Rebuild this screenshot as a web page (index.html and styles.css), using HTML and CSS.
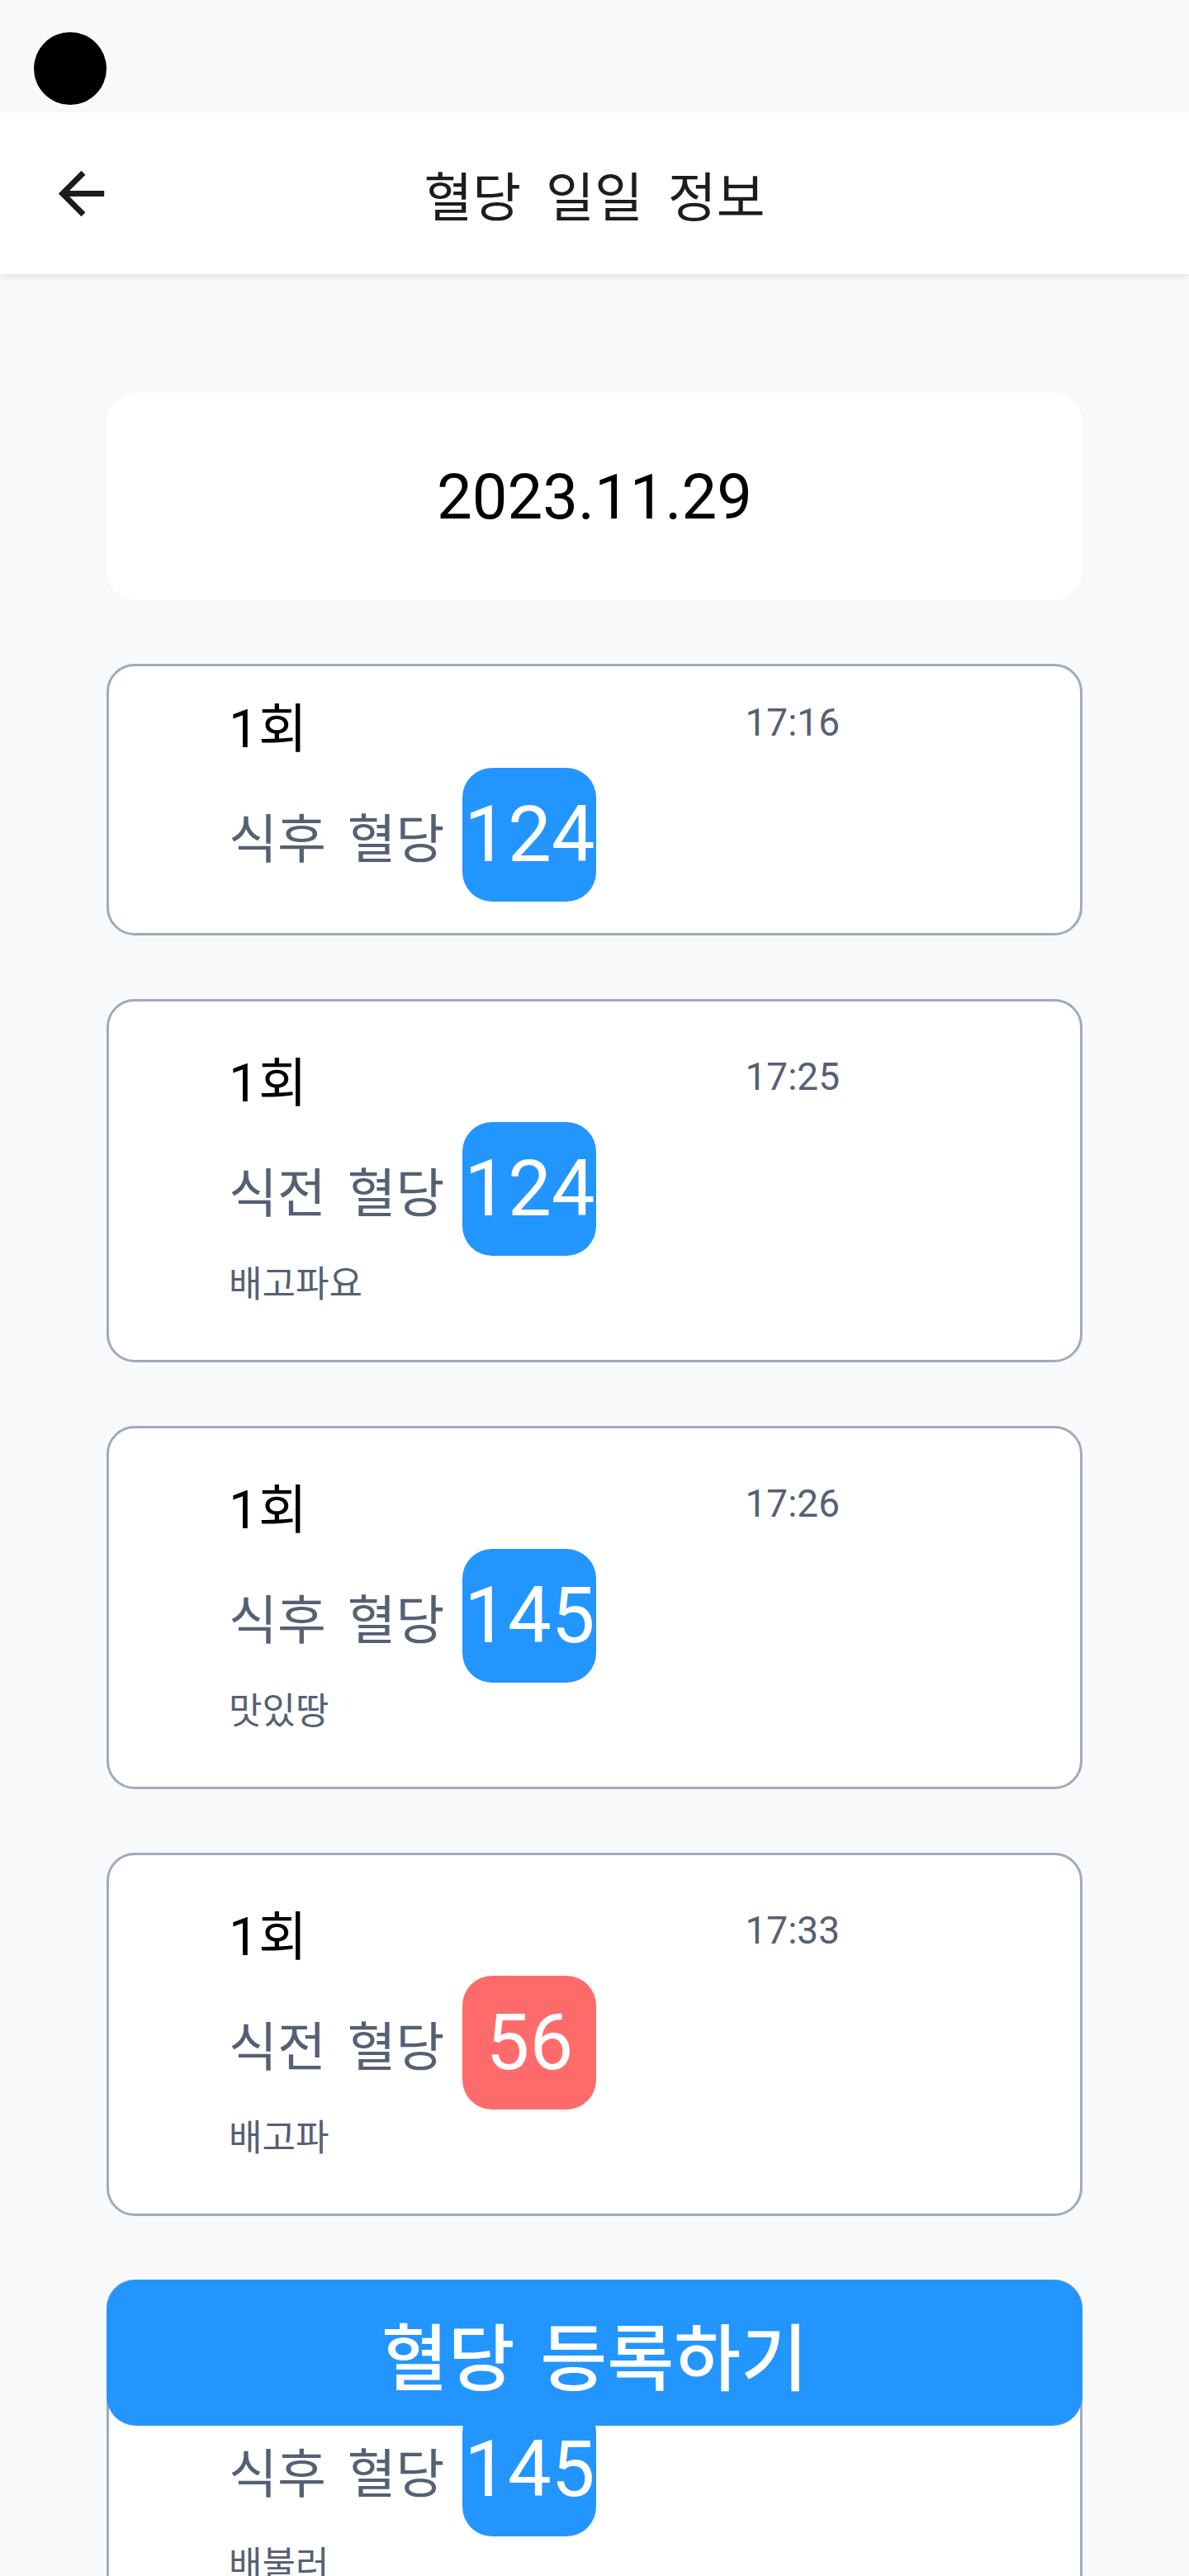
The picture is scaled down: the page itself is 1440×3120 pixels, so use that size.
FILE: index.html
```html
<!DOCTYPE html>
<html lang="ko">
<head>
<meta charset="utf-8">
<title>혈당 일일 정보</title>
<link rel="stylesheet" href="styles.css">
</head>
<body>
<div class="status-bar"><span class="camera"></span></div>
<header class="app-bar">
  <button class="back-btn" aria-label="뒤로">
    <svg viewBox="0 0 24 24" width="83" height="83"><path d="M20 11H7.83l5.59-5.59L12 4l-8 8 8 8 1.41-1.41L7.83 13H20v-2z"/></svg>
  </button>
  <h1 class="app-title">혈당 일일 정보</h1>
  <span class="app-spacer"></span>
</header>
<main class="content">
  <section class="date-card">2023.11.29</section>

  <article class="record">
    <div class="record-head"><span class="count">1회</span><span class="time">17:16</span></div>
    <div class="record-main"><span class="label">식후 혈당</span><span class="badge">124</span></div>
  </article>

  <article class="record record--note">
    <div class="record-head"><span class="count">1회</span><span class="time">17:25</span></div>
    <div class="record-main"><span class="label">식전 혈당</span><span class="badge">124</span></div>
    <p class="note">배고파요</p>
  </article>

  <article class="record record--note">
    <div class="record-head"><span class="count">1회</span><span class="time">17:26</span></div>
    <div class="record-main"><span class="label">식후 혈당</span><span class="badge">145</span></div>
    <p class="note">맛있땅</p>
  </article>

  <article class="record record--note">
    <div class="record-head"><span class="count">1회</span><span class="time">17:33</span></div>
    <div class="record-main"><span class="label">식전 혈당</span><span class="badge badge--low">56</span></div>
    <p class="note">배고파</p>
  </article>

  <article class="record record--note">
    <div class="record-head"><span class="count">1회</span><span class="time">17:40</span></div>
    <div class="record-main"><span class="label">식후 혈당</span><span class="badge">145</span></div>
    <p class="note">배불러</p>
  </article>
</main>
<button class="register-btn">혈당 등록하기</button>
</body>
</html>
```

FILE: styles.css
```css
html, body {
  margin: 0;
  padding: 0;
  width: 1440px;
  height: 3120px;
  overflow: hidden;
}

body {
  background: #f8f9fb;
  font-family: "Roboto", "Noto Sans CJK KR", sans-serif;
  color: #000;
}

.status-bar {
  height: 136px;
  background: #f9f9f9;
  box-sizing: border-box;
  padding: 39px 0 0 41px;
}

.camera {
  display: block;
  width: 88px;
  height: 88px;
  border-radius: 50%;
  background: #000;
}

.app-bar {
  height: 196px;
  background: #fff;
  display: flex;
  align-items: center;
  box-shadow: 0 3px 8px rgba(0, 0, 0, 0.09);
  position: relative;
  z-index: 1;
}

.back-btn {
  width: 83px;
  height: 83px;
  margin-left: 57px;
  padding: 0;
  border: 0;
  background: none;
  display: flex;
}

.back-btn svg {
  fill: #1c1c1c;
}

.app-title {
  flex: 1;
  margin: 0;
  text-align: center;
  font-family: "Noto Sans CJK KR", sans-serif;
  font-weight: 400;
  font-size: 64px;
  word-spacing: 12px;
  color: #1d1d1d;
}

.app-spacer {
  width: 140px;
}

.content {
  display: flex;
  flex-direction: column;
  gap: 77px;
  padding: 144px 129px 0;
}

.date-card {
  height: 251px;
  background: #fff;
  border-radius: 36px;
  display: flex;
  align-items: center;
  justify-content: center;
  font-size: 76px;
  color: #000;
}

.record {
  background: #fff;
  border: 3px solid #a0aabd;
  border-radius: 34px;
  padding: 36px 0 38px 145px;
}

.record--note {
  padding-top: 59px;
  padding-bottom: 70px;
}

.record-head {
  width: 740px;
  display: flex;
  justify-content: space-between;
  align-items: flex-start;
}

.count {
  font-size: 64px;
  line-height: 82px;
}

.time {
  font-size: 46px;
  line-height: 60px;
  color: #566074;
  margin-top: 2px;
}

.record-main {
  margin-top: 5px;
  display: flex;
  align-items: center;
}

.label {
  font-family: "Noto Sans CJK KR", sans-serif;
  font-size: 64px;
  word-spacing: 8px;
  color: #566074;
}

.badge {
  margin-left: 22px;
  width: 162px;
  height: 162px;
  border-radius: 36px;
  background: #2395ff;
  color: #fff;
  font-size: 94px;
  display: flex;
  align-items: center;
  justify-content: center;
}

.badge--low {
  background: #ff6b6b;
}

.note {
  margin: 6px 0 0;
  font-family: "Noto Sans CJK KR", sans-serif;
  font-size: 44px;
  line-height: 50px;
  color: #566074;
}

.register-btn {
  position: fixed;
  left: 129px;
  right: 129px;
  bottom: 182px;
  height: 177px;
  border: 0;
  border-radius: 36px;
  background: #2395ff;
  color: #fff;
  font-family: "Noto Sans CJK KR", sans-serif;
  font-weight: 500;
  font-size: 88px;
  word-spacing: 6px;
  padding: 0;
}
```
